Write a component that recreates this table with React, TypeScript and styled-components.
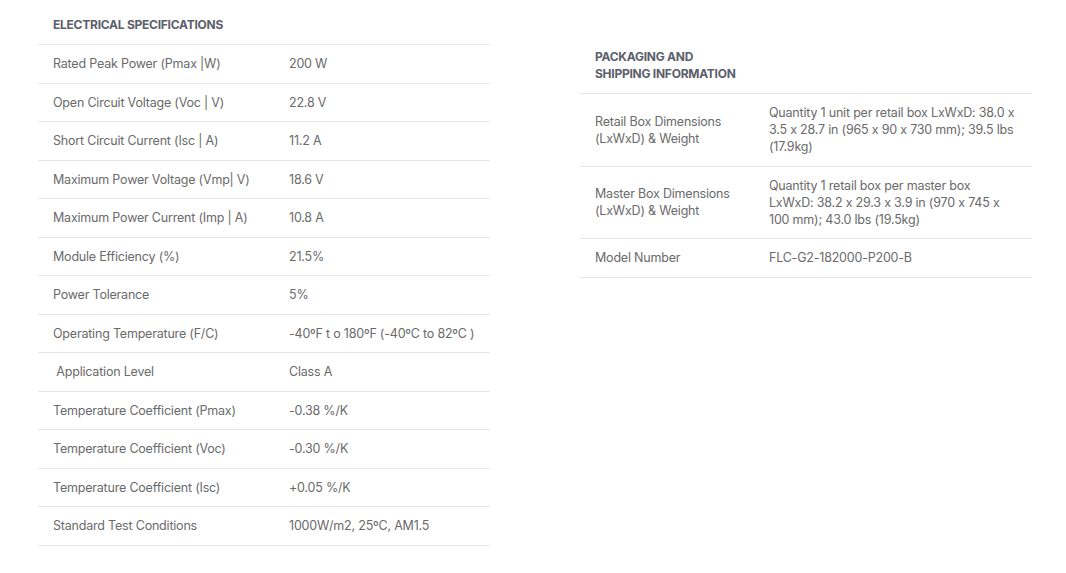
import styled, { createGlobalStyle } from "styled-components";

const GlobalStyle = createGlobalStyle`
	html, body {
		margin: 0;
		padding: 0;
		background: #ffffff;
	}
	body {
		font-family: "Inter", "Noto Sans", sans-serif;
		font-feature-settings: "calt" 0;
		-webkit-font-smoothing: antialiased;
	}
`;

type Row = { label: string; value: string };

const electrical: Row[] = [
	{ label: "Rated Peak Power (Pmax |W)", value: "200 W" },
	{ label: "Open Circuit Voltage (Voc | V)", value: "22.8 V" },
	{ label: "Short Circuit Current (Isc | A)", value: "11.2 A" },
	{ label: "Maximum Power Voltage (Vmp| V)", value: "18.6 V" },
	{ label: "Maximum Power Current (Imp | A)", value: "10.8 A" },
	{ label: "Module Efficiency (%)", value: "21.5%" },
	{ label: "Power Tolerance", value: "5%" },
	{ label: "Operating Temperature (F/C)", value: "-40ºF t o 180ºF (-40ºC to 82ºC )" },
	{ label: "\u00a0Application Level", value: "Class A" },
	{ label: "Temperature Coefficient (Pmax)", value: "-0.38 %/K" },
	{ label: "Temperature Coefficient (Voc)", value: "-0.30 %/K" },
	{ label: "Temperature Coefficient (Isc)", value: "+0.05 %/K" },
	{ label: "Standard Test Conditions", value: "1000W/m2, 25ºC, AM1.5" },
];

const packaging: Row[] = [
	{
		label: "Retail Box Dimensions (LxWxD) & Weight",
		value: "Quantity 1 unit per retail box LxWxD: 38.0 x 3.5 x 28.7 in (965 x 90 x 730 mm); 39.5 lbs (17.9kg)",
	},
	{
		label: "Master Box Dimensions (LxWxD) & Weight",
		value: "Quantity 1 retail box per master box LxWxD: 38.2 x 29.3 x 3.9 in (970 x 745 x 100 mm); 43.0 lbs (19.5kg)",
	},
	{ label: "Model Number", value: "FLC-G2-182000-P200-B" },
];

const StyledPage = styled.div`
	display: flex;
	align-items: flex-start;
	gap: 90px;
	padding: 0 0 0 38px;
	width: 1066px;
	box-sizing: border-box;
`;

const StyledSpecTable = styled.table<{ $offset: number }>`
	width: 452px;
	border-collapse: collapse;
	table-layout: fixed;
	margin-top: ${(p) => p.$offset}px;
`;

const StyledHeadCell = styled.th`
	text-align: left;
	padding: 0 15px 11px;
	font-size: 12px;
	font-weight: 700;
	letter-spacing: -0.25px;
	line-height: 17px;
	color: #5b5e6b;
	text-transform: uppercase;
	border-bottom: 1px solid #e6e6e6;
	vertical-align: bottom;
`;

const StyledRow = styled.tr`
	border-bottom: 1px solid #e6e6e6;
`;

const StyledCell = styled.td<{ $nowrap?: boolean }>`
	padding: 10px 15px 10.5px;
	font-size: 12.5px;
	letter-spacing: -0.2px;
	line-height: 17px;
	color: #6a6a6a;
	vertical-align: middle;
	white-space: ${(p) => (p.$nowrap ? "nowrap" : "normal")};
`;

type SpecTableProps = {
	title: string;
	rows: Row[];
	labelWidth: number;
	offset: number;
	nowrap?: boolean;
};

function SpecTable({ title, rows, labelWidth, offset, nowrap }: SpecTableProps) {
	return (
		<StyledSpecTable $offset={offset}>
			<colgroup>
				<col style={{ width: labelWidth }} />
				<col />
			</colgroup>
			<thead>
				<tr>
					<StyledHeadCell>{title}</StyledHeadCell>
					<StyledHeadCell />
				</tr>
			</thead>
			<tbody>
				{rows.map((row) => (
					<StyledRow key={row.label}>
						<StyledCell>{row.label}</StyledCell>
						<StyledCell $nowrap={nowrap}>{row.value}</StyledCell>
					</StyledRow>
				))}
			</tbody>
		</StyledSpecTable>
	);
}

export default function App() {
	return (
		<>
			<GlobalStyle />
			<StyledPage>
				<SpecTable
					title="Electrical Specifications"
					rows={electrical}
					labelWidth={236}
					offset={16}
					nowrap
				/>
				<SpecTable
					title="Packaging and Shipping Information"
					rows={packaging}
					labelWidth={174}
					offset={48}
				/>
			</StyledPage>
		</>
	);
}
